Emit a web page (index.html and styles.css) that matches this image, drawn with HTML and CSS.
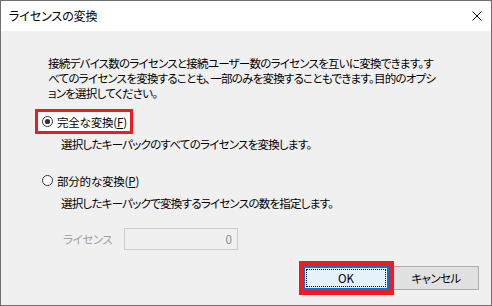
FILE: index.html
```html
<!DOCTYPE html>
<html lang="ja">
<head>
<meta charset="utf-8">
<title>ライセンスの変換</title>
<link rel="stylesheet" href="styles.css">
</head>
<body>
<div class="window">
  <div class="titlebar">
    <span class="title">ライセンスの変換</span>
    <svg class="close" width="10" height="10" viewBox="0 0 10 10"><path d="M0.5 0.5 L9.5 9.5 M9.5 0.5 L0.5 9.5" stroke="#111" stroke-width="1" fill="none"/></svg>
  </div>
  <div class="content">
    <p class="intro">接続デバイス数のライセンスと接続ユーザー数のライセンスを互いに変換できます。す<br>べてのライセンスを変換することも、一部のみを変換することもできます。目的のオプシ<br>ョンを選択してください。</p>
    <div class="option option-first highlight">
      <svg class="radio" width="11" height="11" viewBox="0 0 11 11"><circle cx="5.5" cy="5.5" r="5" fill="#fff" stroke="#333" stroke-width="1"/><circle cx="5.5" cy="5.5" r="2.6" fill="#333"/></svg>
      <span class="opt-text">完全な変換(<u>F</u>)</span>
    </div>
    <p class="desc">選択したキーパックのすべてのライセンスを変換します。</p>
    <div class="option option-second">
      <svg class="radio" width="11" height="11" viewBox="0 0 11 11"><circle cx="5.5" cy="5.5" r="5" fill="#fff" stroke="#333" stroke-width="1"/></svg>
      <span class="opt-text">部分的な変換(<u>P</u>)</span>
    </div>
    <p class="desc">選択したキーパックで変換するライセンスの数を指定します。</p>
    <div class="count-row">
      <span class="count-label">ライセンス</span>
      <div class="count-input">0</div>
    </div>
    <div class="buttons">
      <button class="btn btn-ok">OK</button>
      <button class="btn btn-cancel">キャンセル</button>
    </div>
  </div>
</div>
</body>
</html>
```
FILE: styles.css
```css
* {
  box-sizing: border-box;
  margin: 0;
  padding: 0;
}

body {
  margin: 0;
  font-family: "Noto Sans CJK JP", "Noto Sans", sans-serif;
  font-size: 11.5px;
  letter-spacing: -0.75px;
  color: #000;
  font-feature-settings: "palt";
  background: #fff;
  white-space: nowrap;
}

.window {
  width: 492px;
  height: 306px;
  border: 1px solid #6f6f6f;
  display: flex;
  flex-direction: column;
  background: #f0f0f0;
}

.titlebar {
  height: 30px;
  background: #fff;
  display: flex;
  align-items: center;
  justify-content: space-between;
  padding: 0 9px 0 8px;
}

.title {
  line-height: 16px;
  font-size: 12px;
  letter-spacing: -0.1px;
}

.close {
  display: block;
}

.content {
  flex: 1;
  display: flex;
  flex-direction: column;
  align-items: flex-start;
  padding: 25px 12px 0 0;
}

.intro {
  margin-left: 47px;
  line-height: 15px;
}

.option {
  display: flex;
  align-items: center;
  gap: 4px;
  height: 25px;
  border: 3px solid transparent;
  padding: 0 3px 0 4px;
  margin-left: 34px;
}

.option-first {
  margin-top: 8px;
}

.option-second {
  margin-top: 16px;
}

.option.highlight {
  border-color: #ed1c24;
  background: #fff;
}

.radio {
  display: block;
  flex: none;
}

.opt-text {
  line-height: 16px;
  letter-spacing: -0.2px;
}

.option u {
  text-decoration: underline;
  text-underline-offset: 1px;
}

.desc {
  margin-left: 60px;
  margin-top: 2px;
  line-height: 16px;
}

.count-row {
  display: flex;
  align-items: center;
  margin-top: 17px;
  margin-left: 62px;
  height: 22px;
}

.count-label {
  width: 61px;
  color: #a0a0a0;
  letter-spacing: -0.4px;
}

.count-input {
  width: 114px;
  height: 22px;
  border: 1px solid #cccccc;
  background: #f0f0f0;
  color: #8a8a8a;
  text-align: right;
  padding-right: 5px;
  line-height: 20px;
  letter-spacing: 0;
}

.buttons {
  align-self: flex-end;
  margin-top: 16px;
  display: flex;
  gap: 4px;
}

.btn {
  width: 86px;
  height: 24px;
  font: inherit;
  letter-spacing: -0.6px;
  color: #000;
  border: 1px solid #adadad;
  background: #e1e1e1;
  padding: 0;
}

.btn-ok {
  position: relative;
  border-color: #0078d7;
  box-shadow: inset 0 0 0 1px #0078d7;
  background: #e5f1fb;
  letter-spacing: 0;
}

.btn-ok::before {
  content: "";
  position: absolute;
  inset: 2px;
  border: 1px dotted #000;
}

.btn-ok::after {
  content: "";
  position: absolute;
  top: -6px;
  left: -5px;
  right: -6px;
  bottom: -6px;
  border: 5px solid #ed1c24;
}
```
